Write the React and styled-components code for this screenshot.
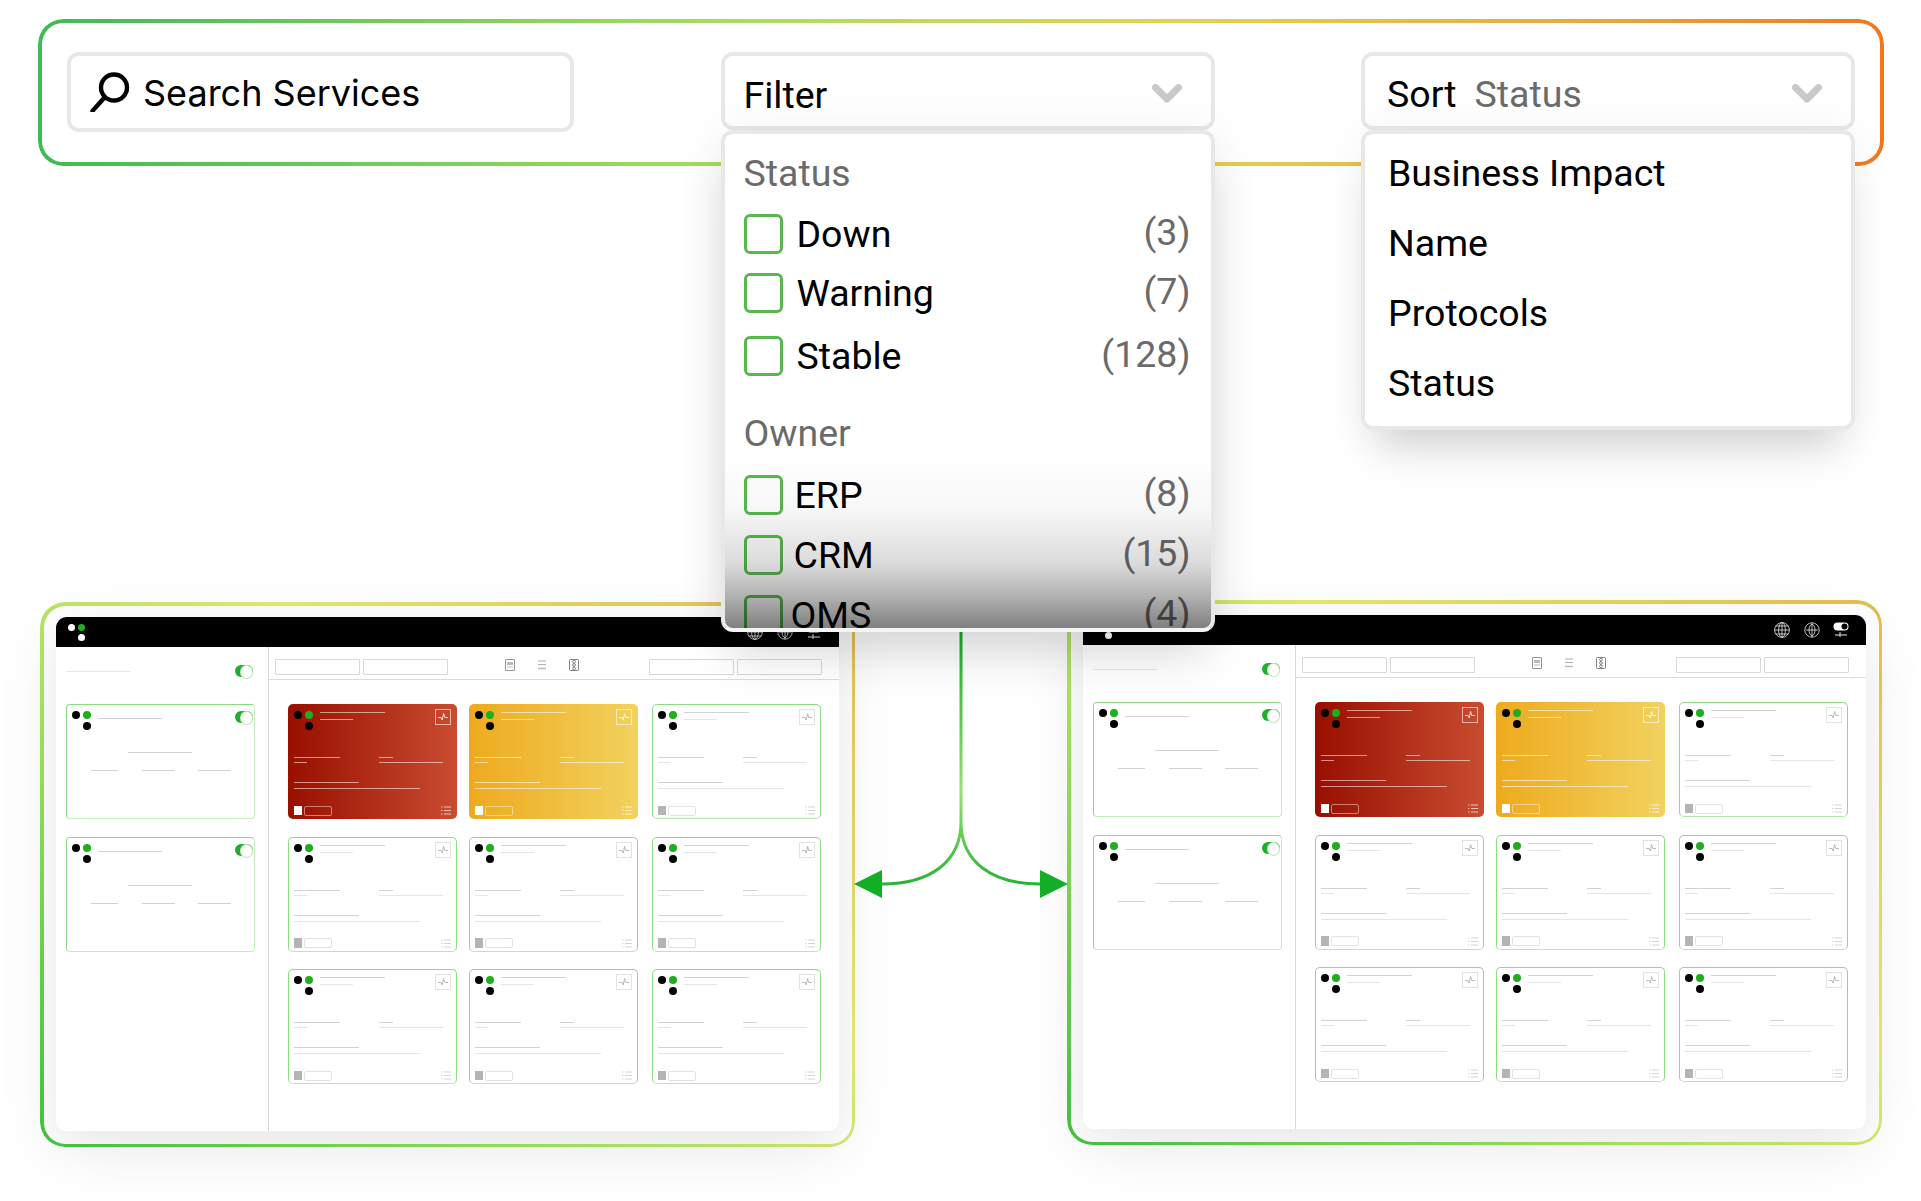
import React from "react";
import styled, { createGlobalStyle } from "styled-components";

const GlobalStyle = createGlobalStyle`
  * { box-sizing: border-box; }
  html, body { margin: 0; background: #fff; }
  body { font-family: Roboto, "Liberation Sans", sans-serif; color: #000; overflow: hidden; }
`;

const statusRows = [
  { label: "Down", count: 3 },
  { label: "Warning", count: 7, gap: -1 },
  { label: "Stable", count: 128, gap: 3 },
];
const ownerRows = [
  { label: "ERP", count: 8, shift: -2 },
  { label: "CRM", count: 15, shift: -3 },
  { label: "OMS", count: 4, shift: -6 },
];
const sortOptions = ["Business Impact", "Name", "Protocols", "Status"];
const cardTones = ["red", "yellow", "plain", "plain", "plain", "plain", "plain", "plain", "plain"];

const App = () => (
  <Page>
    <GlobalStyle />
    <TopFrame>
      <SearchBox>
        <SearchIcon />
        <SearchText>Search Services</SearchText>
      </SearchBox>
      <Dropdown>
        <Trigger>
          <TriggerLabel>Filter</TriggerLabel>
          <Chevron />
        </Trigger>
        <FilterPanel>
          <PanelHeading>Status</PanelHeading>
          {statusRows.map((row) => (
            <CheckRow key={row.label} {...row} />
          ))}
          <PanelHeading $spaced>Owner</PanelHeading>
          {ownerRows.map((row) => (
            <CheckRow key={row.label} {...row} />
          ))}
          <PanelFade />
        </FilterPanel>
      </Dropdown>
      <Dropdown>
        <Trigger $wide>
          <TriggerLabel $wide>
            Sort<SortValue>Status</SortValue>
          </TriggerLabel>
          <Chevron />
        </Trigger>
        <SortPanel>
          {sortOptions.map((name) => (
            <SortItem key={name}>{name}</SortItem>
          ))}
        </SortPanel>
      </Dropdown>
    </TopFrame>

    <ScreensRow>
      <ScreenFrame $lower>
        <MiniApp />
      </ScreenFrame>
      <ScreenFrame>
        <MiniApp />
      </ScreenFrame>
    </ScreensRow>

    <Arrows />
  </Page>
);

export default App;

const CheckRow = ({ label, count, shift = 0, gap }) => (
  <Row $gap={gap}>
    <CheckBox />
    <RowLabel $shift={shift}>{label}</RowLabel>
    <RowCount>({count})</RowCount>
  </Row>
);

const Dots = ({ logo }) => (
  <DotGrid $logo={logo}>
    <Dot />
    <Dot $green />
    <Dot $last />
  </DotGrid>
);

const MiniApp = () => (
  <AppWindow>
    <AppHeader>
      <Dots logo />
      <HeaderIcons>
        <GlobeIcon />
        <CompassIcon />
        <SwitchIcon />
      </HeaderIcons>
    </AppHeader>
    <AppBody>
      <Sidebar>
        <SidebarHead>
          <Line $w={64} $soft />
          <Toggle />
        </SidebarHead>
        <SideCard />
        <SideCard />
      </Sidebar>
      <Main>
        <Toolbar>
          <FieldGroup>
            <Field />
            <Field />
          </FieldGroup>
          <ToolIcons>
            <DocIcon />
            <LinesIcon />
            <LightIcon />
          </ToolIcons>
          <FieldGroup $end>
            <Field />
            <Field />
          </FieldGroup>
        </Toolbar>
        <CardGrid>
          {cardTones.map((tone, i) => (
            <ServiceCard key={i} tone={tone} />
          ))}
        </CardGrid>
      </Main>
    </AppBody>
  </AppWindow>
);

const SideCard = () => (
  <SideCardBox>
    <SideTop>
      <Dots />
      <Line $w={64} />
      <Toggle />
    </SideTop>
    <SideCenter>
      <Line $w={64} />
    </SideCenter>
    <SideColumns>
      <Line $w={27} />
      <Line $w={33} />
      <Line $w={33} />
    </SideColumns>
  </SideCardBox>
);

const ServiceCard = ({ tone }) => (
  <CardBox $tone={tone}>
    <CardTop>
      <Dots />
      <TitleLines>
        <Line $w={65} $tone={tone} />
        <Line $w={33} $tone={tone} $soft />
      </TitleLines>
      <PulseBox $tone={tone}>
        <PulseIcon />
      </PulseBox>
    </CardTop>
    <InfoColumns>
      <InfoColumn>
        <Line $w={46} $tone={tone} />
        <Line $w={13} $tone={tone} $soft />
      </InfoColumn>
      <InfoColumn>
        <Line $w={14} $tone={tone} />
        <Line $w={64} $tone={tone} $soft />
      </InfoColumn>
    </InfoColumns>
    <WideLines>
      <Line $w={65} $tone={tone} />
      <Line $w={126} $tone={tone} $soft />
    </WideLines>
    <CardFooter>
      <Square $tone={tone} />
      <Pill $tone={tone} />
      <ListIcon tone={tone} />
    </CardFooter>
  </CardBox>
);

const SearchIcon = () => (
  <SearchSvg viewBox="0 0 40 40" fill="none" stroke="#000" strokeWidth="4.4" strokeLinecap="round">
    <circle cx="24" cy="15.5" r="13" />
    <path d="M14.5 25.5 L2.5 39" />
  </SearchSvg>
);

const Chevron = () => (
  <ChevronSvg viewBox="0 0 30 19" fill="none" stroke="#c9c9c9" strokeWidth="7" strokeLinejoin="round" strokeLinecap="round">
    <path d="M3.5 3.5 L15 15 L26.5 3.5" />
  </ChevronSvg>
);

const GlobeIcon = () => (
  <HeaderSvg viewBox="0 0 16 16" fill="none" stroke="#e8e8e8" strokeWidth="0.8">
    <circle cx="8" cy="8" r="7.4" />
    <ellipse cx="8" cy="8" rx="3.4" ry="7.4" />
    <path d="M8 .6 V15.4 M.6 8 H15.4 M1.8 4 H14.2 M1.8 12 H14.2" />
  </HeaderSvg>
);

const CompassIcon = () => (
  <HeaderSvg viewBox="0 0 16 16" fill="none" stroke="#e8e8e8" strokeWidth="0.8">
    <circle cx="8" cy="8" r="7.2" />
    <ellipse cx="8" cy="8" rx="3" ry="5.6" />
    <path d="M8 .8 V15.2 M2 8 H14" />
  </HeaderSvg>
);

const SwitchIcon = () => (
  <HeaderSvg viewBox="0 0 16 16" fill="none">
    <rect x="0.5" y="0.5" width="15" height="8" rx="4" fill="#fff" />
    <circle cx="11.5" cy="4.5" r="3" fill="#000" />
    <path d="M2 13 H14 M7 10 V15" stroke="#e8e8e8" strokeWidth="1" />
  </HeaderSvg>
);

const DocIcon = () => (
  <ToolSvg viewBox="0 0 10 12" fill="none" stroke="#777" strokeWidth="0.8">
    <rect x="0.5" y="0.5" width="9" height="11" rx="0.5" />
    <path d="M2 3 H8 V6 H2 Z" fill="#bbb" stroke="none" />
    <path d="M2 8 H8" stroke="#aaa" />
  </ToolSvg>
);

const LinesIcon = () => (
  <ToolSvg viewBox="0 0 10 12" fill="none" stroke="#999" strokeWidth="0.8">
    <path d="M1 2 H9 M1 5.5 H9" />
    <path d="M1 9.5 H9" strokeWidth="1.6" stroke="#bbb" />
  </ToolSvg>
);

const LightIcon = () => (
  <ToolSvg viewBox="0 0 10 12" fill="none" stroke="#666" strokeWidth="0.8">
    <rect x="0.5" y="0.5" width="9" height="11" rx="1" />
    <circle cx="5" cy="2.6" r="1.4" />
    <circle cx="5" cy="6" r="1.4" />
    <circle cx="5" cy="9.4" r="1.4" />
  </ToolSvg>
);

const PulseIcon = () => (
  <svg width="10" height="10" viewBox="0 0 10 10" fill="none" stroke="currentColor" strokeWidth="0.8">
    <path d="M0 5.5 H3 L4.2 8 L5.6 1.5 L6.8 5.5 H10" />
  </svg>
);

const ListIcon = ({ tone }) => (
  <ListSvg $tone={tone} viewBox="0 0 10 9" fill="none" stroke="currentColor" strokeWidth="0.9">
    <path d="M3 1 H10 M3 4.5 H10 M3 8 H10 M0 1 H1.5 M0 4.5 H1.5 M0 8 H1.5" />
  </ListSvg>
);

// connector that leaves the filter panel and splits towards both screens
const Arrows = () => (
  <ArrowSvg viewBox="0 0 230 280" fill="none">
    <defs>
      <linearGradient id="flow" gradientUnits="userSpaceOnUse" x1="0" y1="0" x2="0" y2="270">
        <stop offset="0" stopColor="#14ad28" />
        <stop offset="0.6" stopColor="#9bdf70" />
        <stop offset="1" stopColor="#14ad28" />
      </linearGradient>
    </defs>
    <path
      d="M115 0 V192 C115 232 84 254 36 254 M115 192 C115 232 146 254 194 254"
      stroke="url(#flow)"
      strokeWidth="3"
    />
    <path d="M8 254 L36 240 V268 Z M222 254 L194 240 V268 Z" fill="#14ad28" />
  </ArrowSvg>
);

const Page = styled.div`
  position: relative;
  width: 1921px;
  height: 1201px;
  padding: 19px 39px 0 38px;
  overflow: hidden;
`;

const Ring = styled.div`
  position: relative;
  &::before {
    content: "";
    position: absolute;
    inset: 0;
    padding: ${(p) => p.$stroke || 3.5}px;
    border-radius: 25px;
    pointer-events: none;
    -webkit-mask: linear-gradient(#000 0 0) content-box, linear-gradient(#000 0 0);
    -webkit-mask-composite: xor;
    mask-composite: exclude;
  }
`;

const TopFrame = styled(Ring).attrs({ $stroke: 4 })`
  z-index: 3;
  width: 1846px;
  height: 147px;
  padding: 33px 29px 0 29px;
  display: flex;
  justify-content: space-between;
  align-items: flex-start;
  &::before {
    background: linear-gradient(90deg, #3fba55 0%, #a9de5c 38%, #e4d24f 62%, #eba63a 85%, #f4761d 100%);
  }
`;

const SearchBox = styled.div`
  width: 507px;
  height: 80px;
  border: 4px solid #e8e8e8;
  border-radius: 12px;
  background: #fff;
  display: flex;
  align-items: center;
  padding-left: 19px;
  gap: 13px;
`;

const SearchText = styled.span`
  font-family: Inter, Roboto, sans-serif;
  font-size: 36px;
  padding-top: 2px;
`;

const SearchSvg = styled.svg`
  width: 40px;
  height: 40px;
  flex: none;
`;

const Dropdown = styled.div`
  position: relative;
  width: 494px;
`;

const Trigger = styled.div`
  height: 78px;
  border: 4px solid #e8e8e8;
  border-radius: 12px;
  background: #fff;
  display: flex;
  align-items: center;
  justify-content: space-between;
  padding: 4px 29px 0 ${(p) => (p.$wide ? 22 : 19)}px;
  font-size: 37.5px;
`;

const TriggerLabel = styled.span`
  padding-top: ${(p) => (p.$wide ? 1 : 4)}px;
`;

const SortValue = styled.span`
  color: #6b6b6b;
  margin-left: 18px;
`;

const ChevronSvg = styled.svg`
  width: 30px;
  height: 19px;
`;

const DropPanel = styled.div`
  position: absolute;
  top: 100%;
  left: 0;
  right: 0;
  background: #fff;
  border: 4px solid #e8e8e8;
  border-radius: 12px;
  overflow: hidden;
`;

const FilterPanel = styled(DropPanel)`
  height: 502px;
  padding: 14px 20px 0 19px;
  box-shadow: 0 30px 50px -8px rgba(0, 0, 0, 0.14), 0 0 50px rgba(0, 0, 0, 0.06);
  border-bottom-color: #f4f4f4;
`;

const SortPanel = styled(DropPanel)`
  height: 300px;
  padding: 4px 23px 0;
  box-shadow: 0 34px 40px -16px rgba(0, 0, 0, 0.16), 0 0 50px rgba(0, 0, 0, 0.05);
`;

const SortItem = styled.div`
  height: 70px;
  display: flex;
  align-items: center;
  font-size: 37.5px;
`;

const PanelHeading = styled.div`
  height: 50px;
  line-height: 50px;
  font-size: 37.5px;
  color: #6b6b6b;
  margin: ${(p) => (p.$spaced ? "22px 0 7px" : "0 0 6px")};
`;

const Row = styled.div`
  height: 60px;
  margin-top: ${(p) => p.$gap || 0}px;
  display: flex;
  align-items: center;
  font-size: 37.5px;
`;

const CheckBox = styled.span`
  width: 39px;
  height: 40px;
  border: 3px solid #58b84e;
  border-radius: 6px;
  flex: none;
`;

const RowLabel = styled.span`
  margin-left: ${(p) => 14 + p.$shift}px;
`;

const RowCount = styled.span`
  margin-left: auto;
  color: #6b6b6b;
  transform: translateY(-2px);
`;

const PanelFade = styled.div`
  position: absolute;
  left: 0;
  right: 0;
  bottom: 0;
  height: 170px;
  background: linear-gradient(
    rgba(0, 0, 0, 0) 0%,
    rgba(0, 0, 0, 0.03) 30%,
    rgba(0, 0, 0, 0.14) 62%,
    rgba(0, 0, 0, 0.32) 83%,
    rgba(0, 0, 0, 0.5) 100%
  );
`;

const ScreensRow = styled.div`
  display: flex;
  justify-content: space-between;
  align-items: flex-start;
  margin: 434px 0 0 2px;
`;

const ScreenFrame = styled(Ring)`
  width: 815px;
  height: 545px;
  padding: 15px 16px 0;
  margin-top: ${(p) => (p.$lower ? 2 : 0)}px;
  &::before {
    background: linear-gradient(38deg, #3fc03f 0%, #a5e05e 38%, #dfe66e 62%, #e0bc52 100%);
  }
`;

const AppWindow = styled.div`
  width: 783px;
  height: 514px;
  border-radius: 11px;
  background: #fff;
  overflow: hidden;
  box-shadow: 0 16px 60px rgba(0, 0, 0, 0.1);
  display: flex;
  flex-direction: column;
`;

const AppHeader = styled.div`
  height: 30px;
  flex: none;
  background: #000;
  padding: 6.5px 17px 0 12px;
  display: flex;
  justify-content: space-between;
`;

const HeaderIcons = styled.div`
  display: flex;
  gap: 13.5px;
`;

const HeaderSvg = styled.svg`
  width: 16px;
  height: 16px;
`;

const DotGrid = styled.span`
  display: grid;
  grid-template-columns: ${(p) => (p.$logo ? "7px 7px" : "8px 8px")};
  grid-auto-rows: ${(p) => (p.$logo ? "7px" : "8px")};
  gap: 3px;
  flex: none;
  height: 19px;
  margin-top: ${(p) => (p.$logo ? 0 : 2)}px;
  color: ${(p) => (p.$logo ? "#fff" : "#000")};
`;

const Dot = styled.i`
  border-radius: 50%;
  background: ${(p) => (p.$green ? "#1fae1c" : "currentColor")};
  grid-column: ${(p) => (p.$last ? 2 : "auto")};
`;

const AppBody = styled.div`
  flex: 1;
  display: flex;
`;

const Sidebar = styled.div`
  width: 213px;
  flex: none;
  border-right: 1.5px solid #d8d8d8;
  padding: 18px 10px 0;
`;

const SidebarHead = styled.div`
  display: flex;
  align-items: center;
  justify-content: space-between;
  padding-right: 5px;
  margin-bottom: 27px;
`;

const Toggle = styled.span`
  width: 18px;
  height: 12px;
  border-radius: 6px;
  background: #1fae2a;
  flex: none;
  display: flex;
  justify-content: flex-end;
  &::after {
    content: "";
    width: 11px;
    height: 11.5px;
    border-radius: 50%;
    background: #fff;
    border: 0.5px solid #bfe8b8;
  }
`;

const toneLine = {
  red: "rgba(255,255,255,.55)",
  yellow: "rgba(255,255,255,.6)",
};

const Line = styled.i`
  display: block;
  width: ${(p) => p.$w}px;
  height: 1px;
  flex: none;
  background: ${(p) => toneLine[p.$tone] || (p.$soft ? "#e6e6e6" : "#d2d2d2")};
`;

const SideCardBox = styled.div`
  width: 189px;
  height: 115px;
  margin-bottom: 18px;
  border: 1.5px solid #8bdc82;
  border-bottom-color: #c4eebd;
  border-right-color: #c4eebd;
  border-radius: 4px;
  padding: 4px 1.5px 0 5px;
`;

const SideTop = styled.div`
  display: flex;
  align-items: flex-start;
  height: 43px;
  & > ${Line} {
    margin: 9px 0 0 7px;
  }
  & > ${Toggle} {
    margin: 2px 0 0 auto;
  }
`;

const SideCenter = styled.div`
  display: flex;
  justify-content: center;
  padding-right: 4px;
`;

const SideColumns = styled.div`
  display: flex;
  gap: 24px;
  padding-left: 19px;
  margin-top: 17px;
  & > ${Line}:nth-child(3) {
    margin-left: -1px;
  }
`;

const Main = styled.div`
  flex: 1;
  min-width: 0;
`;

const Toolbar = styled.div`
  height: 33px;
  border-bottom: 1.5px solid #dcdcdc;
  padding: 12px 17px 0 6px;
  display: flex;
  align-items: flex-start;
`;

const FieldGroup = styled.div`
  display: flex;
  gap: 3px;
  margin-left: ${(p) => (p.$end ? "auto" : "0")};
`;

const Field = styled.span`
  width: 85px;
  height: 16px;
  border: 1px solid #d8d8d8;
  border-radius: 1px;
`;

const ToolIcons = styled.div`
  display: flex;
  gap: 22px;
  margin-left: 57px;
`;

const ToolSvg = styled.svg`
  width: 10px;
  height: 12px;
`;

const CardGrid = styled.div`
  display: grid;
  grid-template-columns: 169px 169px 171px;
  column-gap: 12px;
  row-gap: 17.5px;
  padding: 24px 0 0 19px;
  & > :nth-child(3n) {
    justify-self: end;
  }
`;

const cardFill = {
  red: "linear-gradient(90deg, #980f00, #c94c30)",
  yellow: "linear-gradient(90deg, #eeaa1e, #f2d25f)",
  plain: "#fff",
};

const CardBox = styled.div`
  width: 169px;
  height: 115px;
  border-radius: 5px;
  background: ${(p) => cardFill[p.$tone]};
  background-origin: border-box;
  border: 1.5px solid ${(p) => (p.$tone === "plain" ? "#8bdc82" : "transparent")};
  border-bottom-color: ${(p) => (p.$tone === "plain" ? "#b5e8ad" : "transparent")};
  padding: 4px 5px 2.5px;
  display: flex;
  flex-direction: column;
`;

const CardTop = styled.div`
  display: flex;
  align-items: flex-start;
  height: 48px;
  flex: none;
`;

const TitleLines = styled.div`
  display: flex;
  flex-direction: column;
  gap: 6px;
  margin: 3px 0 0 6.5px;
`;

const PulseBox = styled.span`
  width: 16px;
  height: 16px;
  margin-left: auto;
  display: flex;
  align-items: center;
  justify-content: center;
  border: 1px solid ${(p) => (p.$tone === "plain" ? "#e2e2e2" : "rgba(255,255,255,.6)")};
  color: ${(p) => (p.$tone === "plain" ? "#aaa" : "#fff")};
`;

const InfoColumns = styled.div`
  display: grid;
  grid-template-columns: 85px 1fr;
`;

const InfoColumn = styled.div`
  display: flex;
  flex-direction: column;
  gap: 4px;
`;

const WideLines = styled.div`
  display: flex;
  flex-direction: column;
  gap: 5px;
  margin-top: 19px;
`;

const CardFooter = styled.div`
  margin-top: auto;
  display: flex;
  align-items: center;
  gap: 2px;
  height: 10px;
`;

const Square = styled.span`
  width: 7.5px;
  height: 9.5px;
  background: ${(p) => (p.$tone === "plain" ? "#b4b4b4" : "#fff")};
`;

const Pill = styled.span`
  width: 28px;
  height: 10px;
  border-radius: 2px;
  border: 1px solid ${(p) => (p.$tone === "plain" ? "#e2e2e2" : "rgba(255,255,255,.45)")};
`;

const ListSvg = styled.svg`
  width: 10px;
  height: 9px;
  margin-left: auto;
  color: ${(p) => (p.$tone === "plain" ? "#cfcfcf" : "rgba(255,255,255,.75)")};
`;

const ArrowSvg = styled.svg`
  position: absolute;
  left: 846px;
  top: 630px;
  width: 230px;
  height: 280px;
  z-index: 2;
`;
